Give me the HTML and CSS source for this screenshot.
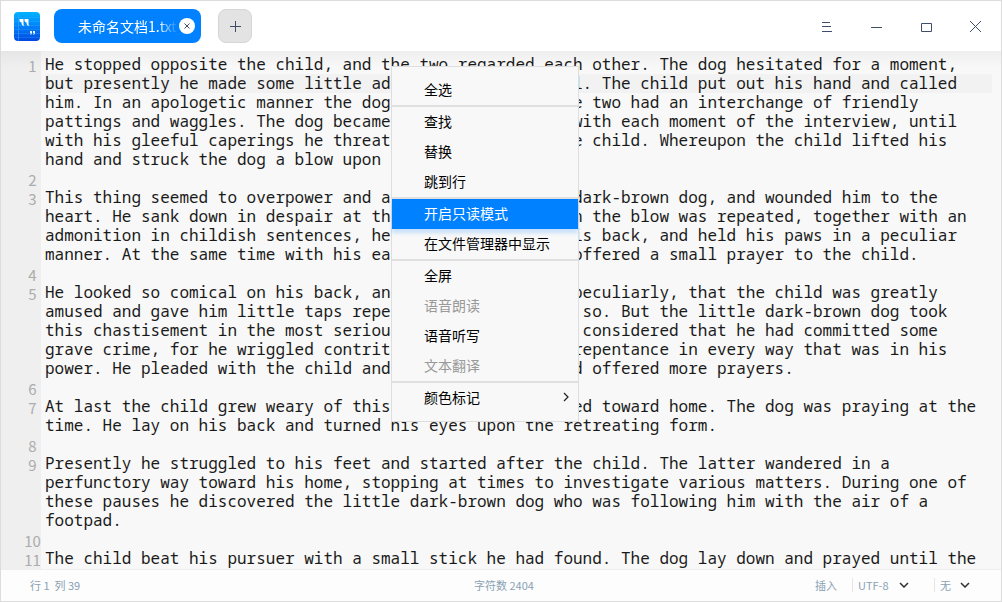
FILE: index.html
```html
<!DOCTYPE html>
<html lang="zh-CN">
<head>
<meta charset="utf-8">
<title>未命名文档1.txt</title>
<link rel="stylesheet" href="styles.css">
</head>
<body>
<div class="window">
  <header class="titlebar">
    <svg class="app-icon" width="26" height="29" viewBox="0 0 26 29" aria-hidden="true">
      <defs><linearGradient id="app-fill" x1="0" y1="0" x2="0" y2="1"><stop offset="0" stop-color="#00b4ff"/><stop offset="0.45" stop-color="#0086fb"/><stop offset="1" stop-color="#0048e0"/></linearGradient></defs>
      <rect width="26" height="29" rx="4" fill="url(#app-fill)"/>
      <path d="M4.500 0v29" stroke="#3aa5ff" stroke-opacity=".6"/>
      <path d="M0 5.500h26M0 9.500h26M0 13.500h26M0 17.500h26M0 21.500h26M0 25.500h26" stroke="#4db4ff" stroke-opacity=".25"/>
      <path d="M5.500 7h4v5q0 1.500 1 2q-3 0-3-3.500q-2-.500-2-2zM10.500 7h4v5q0 1.500 1 2q-3 0-3-3.500q-2-.500-2-2z" fill="#fff"/>
      <path d="M16 19h2v2q0 1.500-2 2q.800-1 .700-2H16zM19 19h2v2q0 1.500-2 2q.800-1 .700-2H19z" fill="#e6f2ff"/>
    </svg>
    <div class="tab">
      <button class="tab-name" type="button">未命名文档1.txt</button>
      <button class="tab-close" type="button" aria-label="关闭标签">
        <svg width="16" height="16" viewBox="0 0 16 16"><path d="M5.500 5.500l5 5M10.500 5.500l-5 5" stroke="#414d68"/></svg>
      </button>
    </div>
    <button class="new-tab" type="button" aria-label="新建标签">
      <svg width="12" height="12" viewBox="0 0 12 12"><path d="M1 6.500h11M6.500 1v11" stroke="#414d68"/></svg>
    </button>
    <div class="window-buttons">
      <button type="button" aria-label="菜单"><svg width="12" height="12" viewBox="0 0 12 12"><path d="M2 2.500h8M2 6.500h9M2 11.500h10" stroke="#414d68"/></svg></button>
      <button type="button" aria-label="最小化"><svg width="12" height="12" viewBox="0 0 12 12"><path d="M1 7.500h11" stroke="#414d68"/></svg></button>
      <button type="button" aria-label="最大化"><svg width="12" height="12" viewBox="0 0 12 12"><path d="M1.500 3.500h10v8h-10z" fill="none" stroke="#414d68"/></svg></button>
      <button type="button" aria-label="关闭"><svg width="12" height="12" viewBox="0 0 12 12"><path d="M0 1l11 11M11 1l-11 11" stroke="#414d68"/></svg></button>
    </div>
  </header>

  <main class="editor">
    <div class="line"><span class="number">1</span><p class="text current">He stopped opposite the child, and the two regarded each other. The dog hesitated for a moment, but presently he made some little advances with his tail. The child put out his hand and called him. In an apologetic manner the dog came close, and the two had an interchange of friendly pattings and waggles. The dog became more enthusiastic with each moment of the interview, until with his gleeful caperings he threatened to overturn the child. Whereupon the child lifted his hand and struck the dog a blow upon the head.</p></div>
    <div class="line"><span class="number">2</span><p class="text"></p></div>
    <div class="line"><span class="number">3</span><p class="text">This thing seemed to overpower and astonish the little dark-brown dog, and wounded him to the heart. He sank down in despair at the child's feet. When the blow was repeated, together with an admonition in childish sentences, he turned over upon his back, and held his paws in a peculiar manner. At the same time with his ears and his eyes he offered a small prayer to the child.</p></div>
    <div class="line"><span class="number">4</span><p class="text"></p></div>
    <div class="line"><span class="number">5</span><p class="text">He looked so comical on his back, and holding his paws peculiarly, that the child was greatly amused and gave him little taps repeatedly, to keep him so. But the little dark-brown dog took this chastisement in the most serious way, and no doubt considered that he had committed some grave crime, for he wriggled contritely and showed his repentance in every way that was in his power. He pleaded with the child and petitioned him, and offered more prayers.</p></div>
    <div class="line"><span class="number">6</span><p class="text"></p></div>
    <div class="line"><span class="number">7</span><p class="text">At last the child grew weary of this amusement and turned toward home. The dog was praying at the time. He lay on his back and turned his eyes upon the retreating form.</p></div>
    <div class="line"><span class="number">8</span><p class="text"></p></div>
    <div class="line"><span class="number">9</span><p class="text">Presently he struggled to his feet and started after the child. The latter wandered in a perfunctory way toward his home, stopping at times to investigate various matters. During one of these pauses he discovered the little dark-brown dog who was following him with the air of a footpad.</p></div>
    <div class="line"><span class="number">10</span><p class="text"></p></div>
    <div class="line"><span class="number">11</span><p class="text">The child beat his pursuer with a small stick he had found. The dog lay down and prayed until the</p></div>
  </main>

  <footer class="statusbar">
    <span class="position">行 1&nbsp; 列 39</span>
    <span class="count">字符数 2404</span>
    <div class="modes">
      <span class="insert">插入</span>
      <label class="picker"><select class="encoding" aria-label="编码"><option>UTF-8</option></select><svg width="10" height="6" viewBox="0 0 10 6"><path d="M1 1l4 4 4-4" fill="none" stroke="#303030" stroke-width="1.500"/></svg></label>
      <label class="picker"><select class="syntax" aria-label="语法高亮"><option>无</option></select><svg width="10" height="6" viewBox="0 0 10 6"><path d="M1 1l4 4 4-4" fill="none" stroke="#303030" stroke-width="1.500"/></svg></label>
    </div>
  </footer>

  <div class="context-menu" role="menu">
    <button type="button" role="menuitem">全选</button>
    <hr>
    <button type="button" role="menuitem">查找</button>
    <button type="button" role="menuitem">替换</button>
    <button type="button" role="menuitem">跳到行</button>
    <hr>
    <button class="active" type="button" role="menuitem">开启只读模式</button>
    <button type="button" role="menuitem">在文件管理器中显示</button>
    <hr>
    <button type="button" role="menuitem">全屏</button>
    <button type="button" role="menuitem" disabled>语音朗读</button>
    <button type="button" role="menuitem">语音听写</button>
    <button type="button" role="menuitem" disabled>文本翻译</button>
    <hr>
    <button type="button" role="menuitem">颜色标记<svg width="6" height="10" viewBox="0 0 6 10"><path d="M1 1l4 4-4 4" fill="none" stroke="#202020" stroke-width="1.200"/></svg></button>
  </div>
</div>
</body>
</html>
```
FILE: styles.css
```css
* { box-sizing: border-box; }
body { margin: 0; font-family: "Noto Sans CJK SC", sans-serif; font-size: 14px; }
button { margin: 0; padding: 0; border: 0; background: none; font: inherit; color: inherit; }
svg { display: block; flex: none; }

.window {
  position: relative;
  display: flex;
  flex-direction: column;
  height: 100vh;
  border: 1px solid #dcdcdc;
  background: #f8f8f8;
  overflow: hidden;
}

.titlebar {
  display: flex;
  flex: none;
  align-items: center;
  height: 50px;
  padding: 0 0 0 13px;
  background: #fff;
}
.tab {
  display: flex;
  align-items: center;
  width: 147px;
  height: 34px;
  margin-left: 14px;
  padding: 0 6px 0 24px;
  border-radius: 8px;
  background: #0081ff;
}
.tab-name {
  flex: 1;
  min-width: 0;
  overflow: hidden;
  text-align: left;
  white-space: nowrap;
  line-height: 34px;
  color: #fff;
  mask-image: linear-gradient(to right, #000 80px, transparent 100px);
}
.tab-close { width: 16px; height: 16px; border-radius: 50%; background: #fff; }
.new-tab {
  display: grid;
  place-items: center;
  width: 34px;
  height: 34px;
  margin-left: 17px;
  border: 1px solid #d6d6d6;
  border-radius: 8px;
  background: #e3e3e3;
}
.window-buttons { display: flex; margin-left: auto; }
.window-buttons button { display: grid; place-items: center; width: 50px; height: 50px; }

.editor {
  flex: 1;
  min-height: 0;
  padding-top: 4px;
  overflow: hidden;
  background:
    linear-gradient(rgba(0, 0, 0, .04), transparent) top / 100% 16px no-repeat,
    linear-gradient(#efefef, #efefef) left / 40px 100% no-repeat,
    #f8f8f8;
}
.line { display: grid; grid-template-columns: 40px 1fr; column-gap: 4px; padding-right: 9px; }
.number {
  height: 20px;
  margin-bottom: -1px;
  padding-left: 23px;
  font: 15px/22px "Noto Sans CJK SC", sans-serif;
  text-align: center;
  color: #acacac;
}
.text {
  margin: 0;
  min-height: 19px;
  font: 16px/19px "Noto Sans Mono", "DejaVu Sans Mono", monospace;
  color: #1a1a1a;
}
.current { background: linear-gradient(#f2f2f2, #f2f2f2) 0 19px / 100% 19px no-repeat; }

.statusbar {
  display: grid;
  flex: none;
  grid-template-columns: 1fr auto 1fr;
  align-items: center;
  height: 32px;
  padding: 0 31px 2px 29px;
  border-top: 1px solid #efefef;
  background: #fdfdfd;
  font-size: 11px;
  color: #8aa1b4;
}
.count { padding-left: 8px; }
.modes { display: flex; align-items: center; justify-content: flex-end; }
.insert { margin-right: 15px; }
.picker { display: flex; align-items: center; height: 14px; padding-left: 5px; border-left: 1px solid #e6e6e6; }
.picker + .picker { margin-left: 25px; }
.picker select { appearance: none; margin: 0; padding: 0; border: 0; background: none; font: inherit; color: inherit; }
.encoding { width: 41px; }
.syntax { width: 20px; }

.context-menu {
  position: absolute;
  top: 65px;
  left: 390px;
  display: flex;
  flex-direction: column;
  width: 188px;
  padding: 8px 0;
  border: 1px solid #dedede;
  background: #f8f8f8;
  color: #000;
}
.context-menu button {
  display: flex;
  align-items: center;
  justify-content: space-between;
  height: 30px;
  padding: 0 9px 2px 32px;
}
.context-menu button:disabled { color: #999; }
.context-menu .active { background: #0081ff; color: #fff; box-shadow: 0 4px 4px rgba(0, 129, 255, .2); }
.context-menu hr { width: 100%; height: 2px; margin: 0; border: 0; background: #dfdfdf; }
```
